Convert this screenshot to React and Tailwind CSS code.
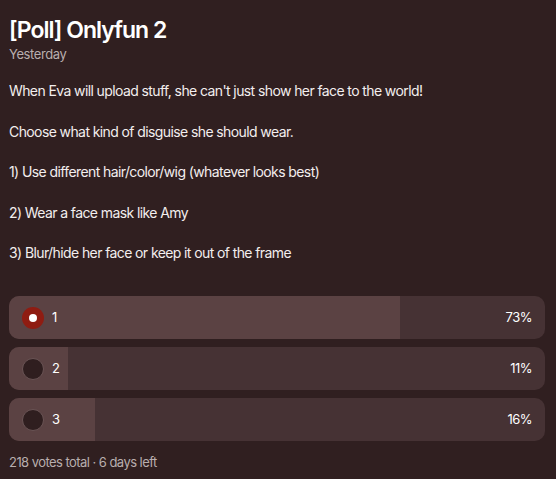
import React from "react";

const options = [
    { label: "1", pct: 73, selected: true },
    { label: "2", pct: 11, selected: false },
    { label: "3", pct: 16, selected: false },
];

const App = () => {
    return (
        <div className="min-h-screen bg-[#301f20] text-white px-[9px] pt-[14px]" style={{ fontFamily: "Inter, 'Noto Sans', sans-serif" }}>
            <h1 className="text-[23px] font-semibold leading-[32px] tracking-[-1px]">[Poll] Onlyfun 2</h1>
            <div className="text-[13px] text-[#b8aeae] leading-[16px] tracking-[-0.4px]">Yesterday</div>

            <div className="mt-[19px] text-[14px] leading-[20px] text-[#f3eeee] tracking-[-0.6px] space-y-[20.5px]">
                <p>When Eva will upload stuff, she can't just show her face to the world!</p>
                <p>Choose what kind of disguise she should wear.</p>
                <p>1) Use different hair/color/wig (whatever looks best)</p>
                <p>2) Wear a face mask like Amy</p>
                <p>3) Blur/hide her face or keep it out of the frame</p>
            </div>

            <div className="mt-[33px] flex flex-col gap-[8px] w-[536px]">
                {options.map((o) => (
                    <div key={o.label} className="relative h-[43px] rounded-[10px] bg-[#463234] overflow-hidden">
                        <div className="absolute left-0 top-0 bottom-0 bg-[#5b4243]" style={{ width: `${o.pct}%` }} />
                        <div className="relative h-full flex items-center px-[13px] tracking-[-0.5px]">
                            {o.selected ? (
                                <div className="w-[22px] h-[22px] rounded-full bg-[#8f1c12] flex items-center justify-center">
                                    <div className="w-[8px] h-[8px] rounded-full bg-white" />
                                </div>
                            ) : (
                                <div className="w-[22px] h-[22px] rounded-full bg-[#2f1e1f] border border-[#6a5455]" />
                            )}
                            <span className="ml-[8px] text-[13px]">{o.label}</span>
                            <span className="ml-auto text-[13px]">{o.pct}%</span>
                        </div>
                    </div>
                ))}
            </div>

            <div className="mt-[12px] text-[13px] text-[#b8aeae] tracking-[-0.55px]">218 votes total · 6 days left</div>
        </div>
    );
};

export default App;
